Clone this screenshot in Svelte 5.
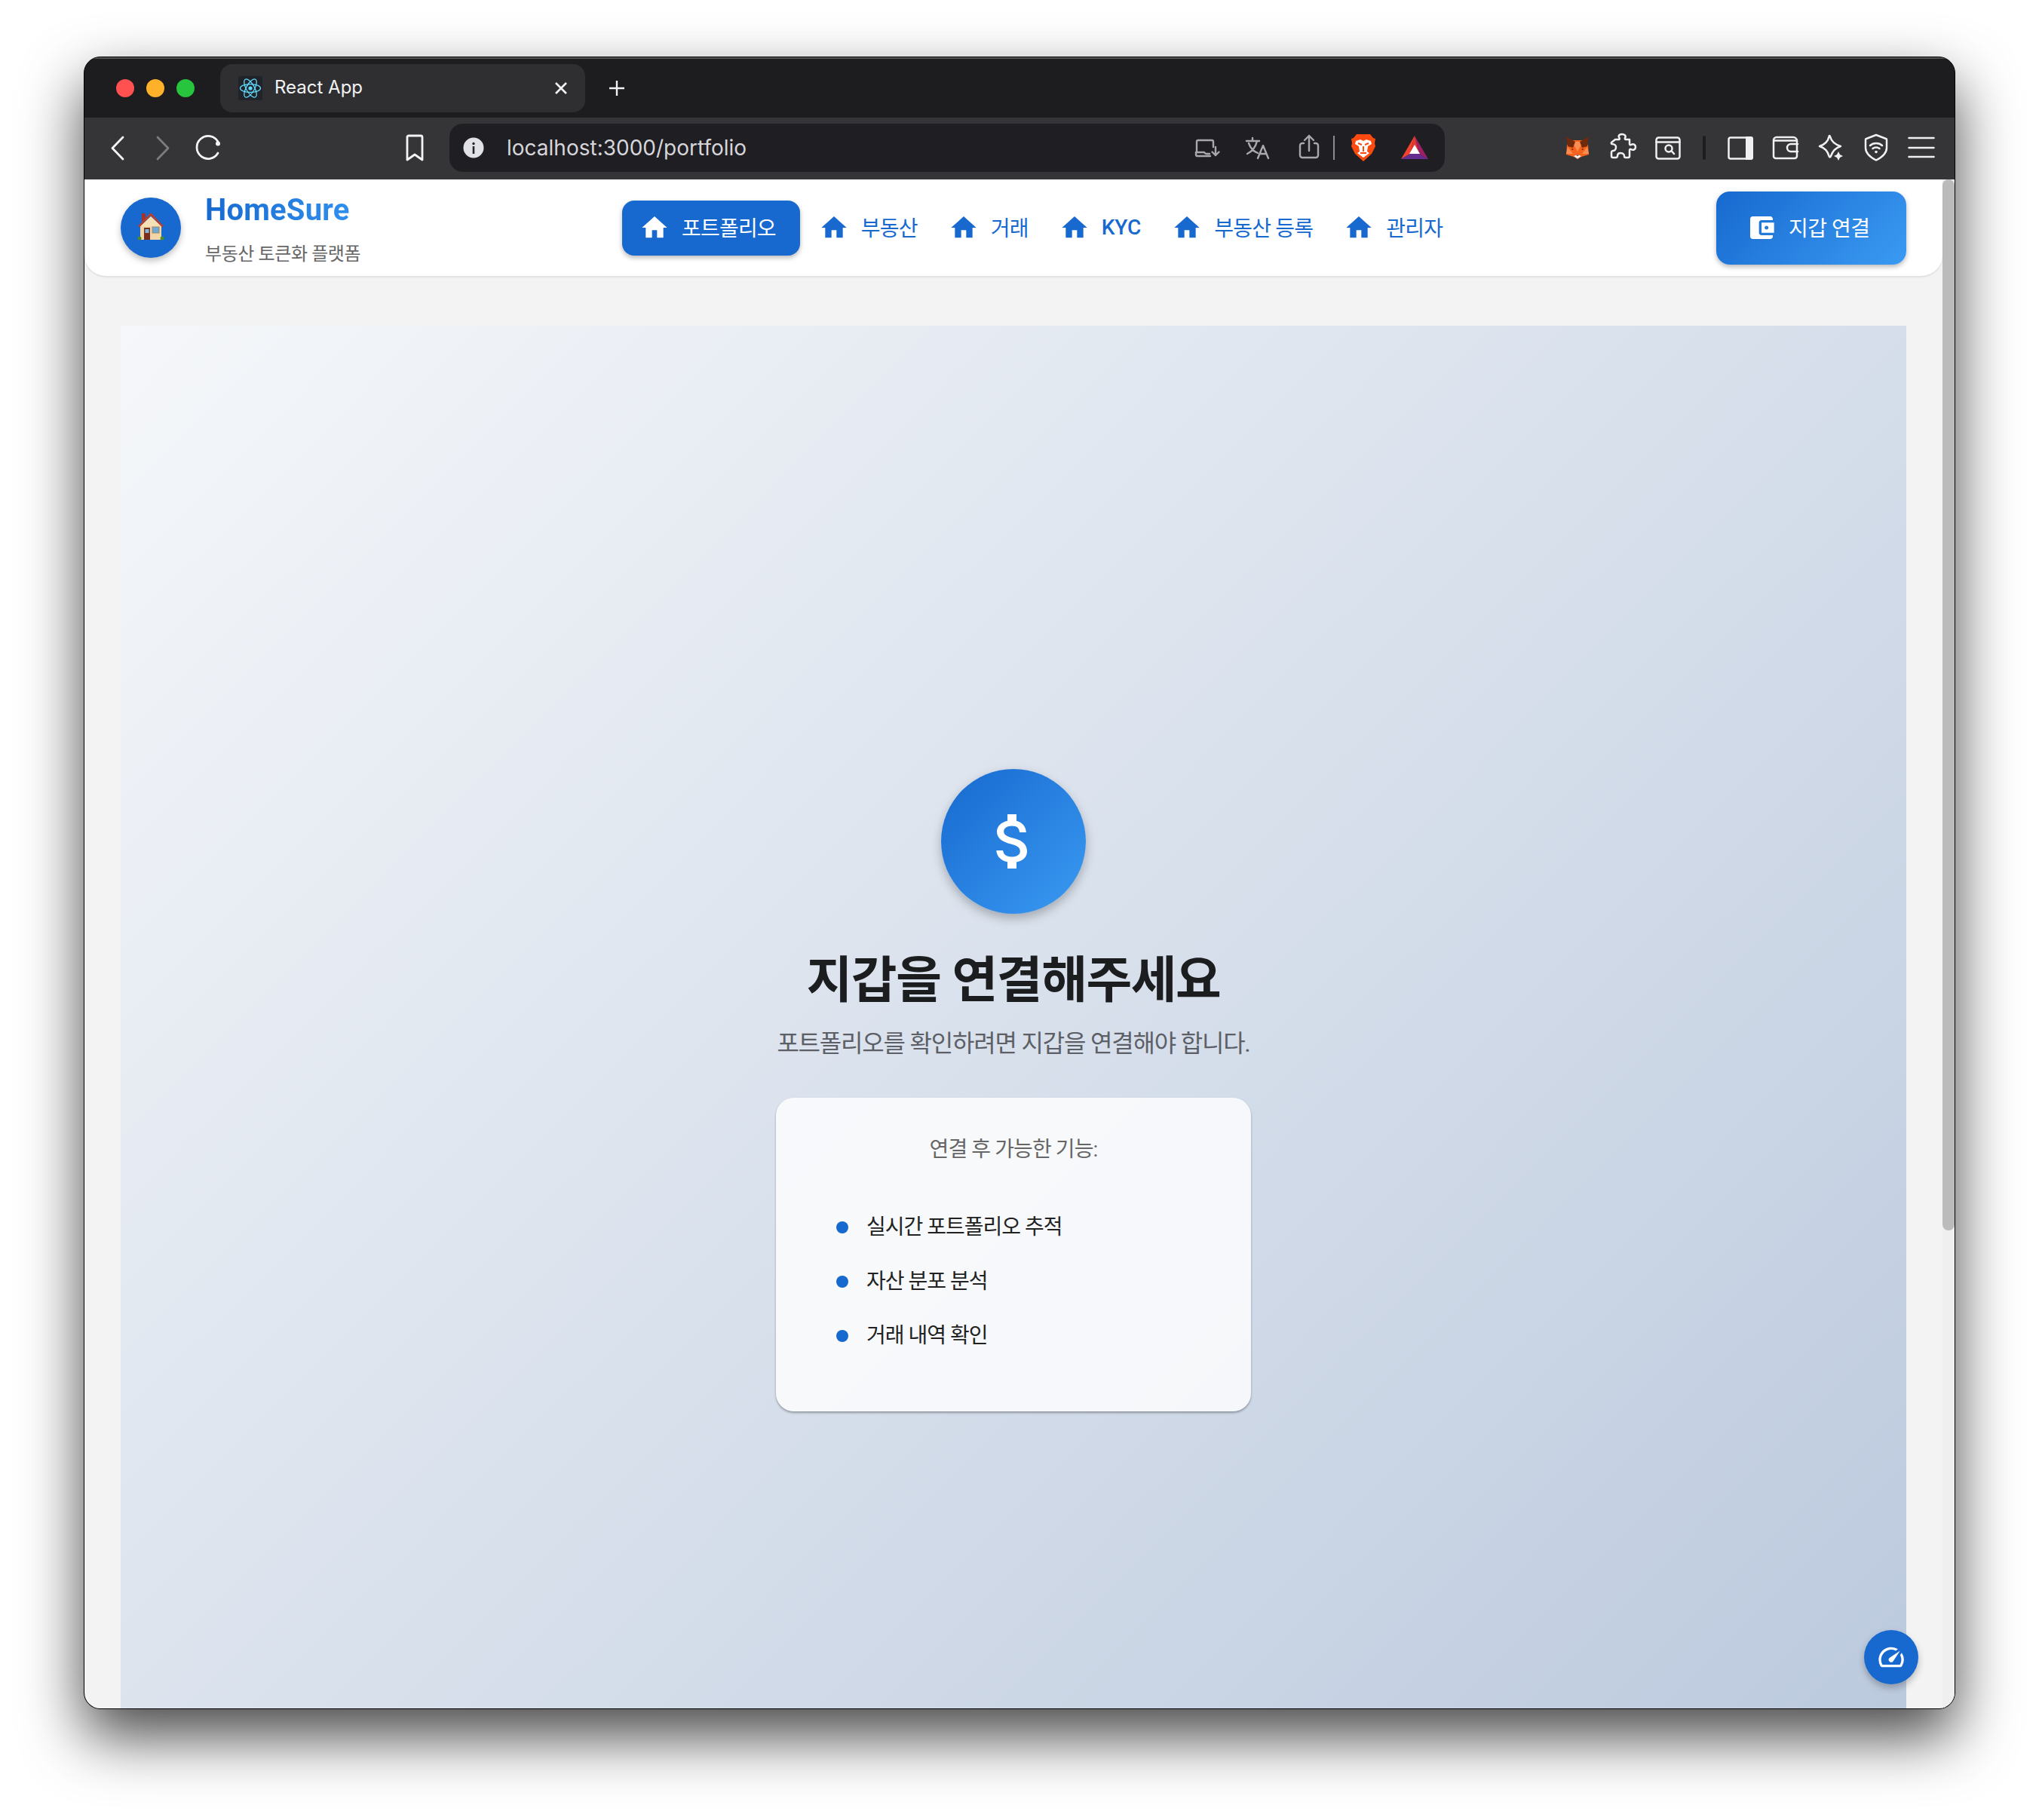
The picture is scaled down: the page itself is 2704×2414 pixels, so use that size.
<script>
  const navItems = [
    { label: '포트폴리오', active: true },
    { label: '부동산' },
    { label: '거래' },
    { label: 'KYC', latin: true },
    { label: '부동산 등록' },
    { label: '관리자' }
  ];
  const features = ['실시간 포트폴리오 추적', '자산 분포 분석', '거래 내역 확인'];
</script>

<div class="window">
  <div class="tabbar">
    <div class="dots">
      <span class="dot red"></span>
      <span class="dot amber"></span>
      <span class="dot green"></span>
    </div>
    <div class="tab">
      <svg class="favicon" viewBox="0 0 32 32">
        <rect width="32" height="32" rx="3" fill="#20232a" />
        <g fill="none" stroke="#61dafb" stroke-width="1.3">
          <ellipse cx="16" cy="16" rx="13.5" ry="5.4" />
          <ellipse cx="16" cy="16" rx="13.5" ry="5.4" transform="rotate(60 16 16)" />
          <ellipse cx="16" cy="16" rx="13.5" ry="5.4" transform="rotate(120 16 16)" />
        </g>
        <circle cx="16" cy="16" r="2.6" fill="#61dafb" />
      </svg>
      <span class="tab-title">React App</span>
      <svg class="tab-close" viewBox="0 0 16 16"><path d="M1 1 L15 15 M15 1 L1 15" /></svg>
    </div>
    <svg class="new-tab" viewBox="0 0 22 22"><path d="M11 1 V21 M1 11 H21" /></svg>
  </div>

  <div class="toolbar">
    <svg class="ti" viewBox="0 0 40 40"><path class="s3" d="M27 6 L13 20.5 L27 35" /></svg>
    <svg class="ti" viewBox="0 0 40 40"><path class="s3 dim" d="M13 6 L27 20.5 L13 35" /></svg>
    <svg class="ti" viewBox="0 0 40 40">
      <path class="s3" d="M33 12 A15 15 0 1 0 33 27" />
      <circle cx="33" cy="14.500" r="3" fill="#f4f4f4" />
    </svg>
    <svg class="ti bookmark" viewBox="0 0 40 40"><path class="s3" d="M10 6 a2 2 0 0 1 2-2 H28 a2 2 0 0 1 2 2 V36 L20 29 L10 36 Z" /></svg>

    <div class="urlbar">
      <svg class="info" viewBox="0 0 28 28">
        <circle cx="14" cy="14" r="13.5" fill="#e1e1e8" />
        <circle cx="14" cy="8.5" r="1.7" fill="#26262a" />
        <rect x="12.7" y="12" width="2.6" height="10" fill="#26262a" />
      </svg>
      <span class="url">localhost:3000/portfolio</span>
      <div class="url-tools">
        <svg class="ui" viewBox="0 0 40 40">
          <path class="g" d="M6 26 V12 a2 2 0 0 1 2-2 h18 a2 2 0 0 1 2 2 v7 M5 26 h11 q1 2 3 2 h4 M5 26 v3 a2 2 0 0 0 2 2 h17 M31 19 v11 m-4.500-4.500 l4.500 4.500 4.500-4.500" />
        </svg>
        <svg class="ui u2" viewBox="0 0 40 40">
          <path class="g" d="M5 11 H22 M13 7 v4 M19 11 C17 20 12 25 6 28 M8 14 C10 20 15 25 20 27 M20 34 L27 17 L34 34 M23 28 H31" />
        </svg>
        <svg class="ui u2" viewBox="0 0 40 40">
          <path class="g" d="M14 14 H12 a3 3 0 0 0-3 3 v13 a3 3 0 0 0 3 3 h18 a3 3 0 0 0 3-3 V17 a3 3 0 0 0-3-3 h-2 M21 24 V4 M15 10 l6-6 6 6" />
        </svg>
        <span class="url-divider"></span>
        <svg class="ui u3" viewBox="0 0 40 40">
          <path fill="#fb4a0f" d="M12 2 L30 2 L34 7 L37 8 L36 14 L37 18 L32 28 L21 38 L10 28 L5 18 L6 14 L5 8 L8 7 Z" />
          <path fill="#fff" d="M11 11 L17 9 L21 11 L25 9 L31 11 L32 15 L27 18 L26 25 L29 27 L21 33 L13 27 L16 25 L15 18 L10 15 Z" />
          <path fill="none" stroke="#fb4a0f" stroke-width="2" d="M14 14 l5 2 M28 14 l-5 2 M21 18 v7 M17 27 h8" />
        </svg>
        <svg class="ui u4" viewBox="0 0 40 40">
          <polygon points="20,4 2,35 14,28" fill="#f2432c" />
          <polygon points="20,4 38,35 26,28" fill="#9e1f63" />
          <polygon points="2,35 38,35 26,28 14,28" fill="#662d91" />
          <polygon points="20,4 14,28 26,28" fill="#e23a32" />
          <polygon points="20,16 27,28 13,28" fill="#fff" />
        </svg>
      </div>
    </div>

    <div class="ext-tools">
      <svg class="ti" viewBox="0 0 40 40">
        <path fill="#f6621c" d="M6 16 L13 10 H27 L34 16 L35 29 L25 32 L20 35 L15 32 L5 29 Z" />
        <path fill="#fa8d52" d="M13 12 L20 25 L27 12 Z M7 19 L14 28 L5 28 Z M33 19 L26 28 L35 28 Z" />
        <path fill="#6e2a0a" d="M5 5 L17 12 L14 20 L7 18 Z M35 5 L23 12 L26 20 L33 18 Z" />
        <path fill="#4a1c06" d="M12 21 l3 1 -2 1 Z M28 21 l-3 1 2 1 Z" />
        <path fill="#f2f2f2" d="M15 31 L20 29 L25 31 L20 34.500 Z" />
        <path fill="#2a1408" d="M18 29.500 h4 l-2 1.500 Z" />
      </svg>
      <svg class="ti" viewBox="0 0 40 40">
        <path class="w" d="M10 9 H15 C16 9 16 8 15.500 7 C13 3 17 2 19 2 C22 2 25 4 23 7 C22.500 8 23 9 24 9 H29 V15 C29 16 30 16.500 31 16 C34 14 37 16 37 19 C37 22 34 24 31 22 C30 21.500 29 22 29 23 V31 a2 2 0 0 1-2 2 H24 C22 33 22 32 22 31 C22 28 19 27 17 27 C15 27 13 28 13 31 C13 32 12 33 11 33 H7 a2 2 0 0 1-2-2 V26 C5 25 6 24 7 24 C10 24 11 21 11 19 C11 17 9 15 6 15 C5 15 4.500 14 5 13 Z" />
      </svg>
      <svg class="ti" viewBox="0 0 40 40">
        <rect class="w" x="4.500" y="6.500" width="31" height="28" rx="3" />
        <path class="w" d="M4.500 12.500 H35.500 M24.500 24 L28 28" />
        <circle class="w" cx="21" cy="21" r="4.500" />
      </svg>
      <span class="ext-divider"></span>
      <svg class="ti" viewBox="0 0 40 40">
        <rect class="w" x="4.500" y="6.500" width="31" height="28" rx="2.500" />
        <path d="M27 5 H34 a3 3 0 0 1 3 3 V33 a3 3 0 0 1-3 3 H27 Z" fill="#f0f0f2" />
      </svg>
      <svg class="ti" viewBox="0 0 40 40">
        <path class="w" d="M4 10 a4 4 0 0 1 4-4 H30 a5 5 0 0 1 5 5 V31 a3 3 0 0 1-3 3 H7 a3 3 0 0 1-3-3 Z M5 10.500 H35 M36 15 H27 a5 5 0 0 0 0 10 H36" />
      </svg>
      <svg class="ti" viewBox="0 0 40 40">
        <path class="w" d="M19 5 C20.500 11 25 15.500 33 18 C26 20 22.500 24 20 31 C19.500 33 18 33 17.500 31 C15.500 24 12 20 5 18 C12 15.500 16.500 11 17.500 5 C17.700 3.500 18.700 3.500 19 5 Z" />
        <path fill="#f0f0f2" d="M30 25 L32 29 L36 31 L32 33 L30 37 L28 33 L24 31 L28 29 Z" />
      </svg>
      <svg class="ti" viewBox="0 0 40 40">
        <path class="w" d="M20 3 L33 8 a1 1 0 0 1 1 1 V20 C34 28 27 33 20 36.500 C13 33 6 28 6 20 V9 a1 1 0 0 1 1-1 Z" />
        <path class="w" d="M12 17 C16 13 24 13 28 17 M15.500 21 C18 19 22 19 24.500 21" />
        <circle cx="20" cy="25.500" r="1.800" fill="#f0f0f2" />
      </svg>
      <svg class="ti" viewBox="0 0 40 40"><path class="w" d="M3.500 7 H36.500 M3.500 20 H36.500 M3.500 32 H36.500" /></svg>
    </div>
  </div>

  <div class="viewport">
    <header class="app-header">
      <div class="brand">
        <div class="logo">
          <svg viewBox="0 0 40 40" class="house">
            <rect x="8" y="3" width="5" height="10" fill="#a8322a" />
            <rect x="6" y="17" width="28" height="21" fill="#f1d7a8" />
            <path d="M20 7 L6 20 L34 20 Z" fill="#f6e0b8" />
            <path d="M20 2 L37 20 L35 21.500 L20 6 L5 21.500 L3 20 Z" fill="#b5402f" />
            <rect x="11" y="22" width="8" height="16" fill="#7a2f1e" />
            <rect x="12.500" y="24" width="5" height="5" fill="#7fb6de" />
            <rect x="22" y="21" width="9" height="8" fill="#6fa8d6" stroke="#9a8a6a" />
            <circle cx="5" cy="36" r="2.500" fill="#4c8c2b" />
            <circle cx="35" cy="36" r="2.500" fill="#4c8c2b" />
          </svg>
        </div>
        <div class="brand-text">
          <div class="brand-name">HomeSure</div>
          <div class="brand-sub">부동산 토큰화 플랫폼</div>
        </div>
      </div>

      <nav class="nav">
        {#each navItems as item}
          <button class="nav-btn" class:active={item.active}>
            <svg viewBox="0 0 24 24"><path d="M10 20v-6h4v6h5v-8h3L12 3 2 12h3v8z" /></svg>
            <span class:latin={item.latin}>{item.label}</span>
          </button>
        {/each}
      </nav>

      <button class="wallet-btn">
        <svg viewBox="0 0 24 24"><path d="M21 18v1c0 1.100-.9 2-2 2H5c-1.110 0-2-.9-2-2V5c0-1.100.89-2 2-2h14c1.100 0 2 .9 2 2v1h-9c-1.110 0-2 .9-2 2v8c0 1.100.89 2 2 2h9zm-9-2h10V8H12v8zm4-2.500c-.83 0-1.500-.67-1.500-1.500s.67-1.500 1.500-1.500 1.500.67 1.500 1.500-.67 1.500-1.500 1.500z" /></svg>
        <span>지갑 연결</span>
      </button>
    </header>

    <main class="main">
      <section class="panel">
        <div class="coin">
          <svg viewBox="0 0 24 24"><path d="M11.800 10.900c-2.270-.59-3-1.200-3-2.150 0-1.090 1.010-1.850 2.700-1.850 1.780 0 2.440.85 2.500 2.100h2.210c-.07-1.720-1.120-3.300-3.210-3.810V3h-3v2.160c-1.940.42-3.500 1.680-3.500 3.610 0 2.310 1.910 3.460 4.700 4.130 2.500.6 3 1.480 3 2.410 0 .69-.49 1.790-2.700 1.790-2.060 0-2.870-.92-2.980-2.100h-2.200c.12 2.190 1.760 3.420 3.680 3.830V21h3v-2.150c1.950-.37 3.500-1.500 3.500-3.550 0-2.840-2.430-3.810-4.700-4.400z" /></svg>
        </div>
        <h1>지갑을 연결해주세요</h1>
        <p class="lead">포트폴리오를 확인하려면 지갑을 연결해야 합니다.</p>
        <div class="card">
          <p class="card-title">연결 후 가능한 기능:</p>
          <ul>
            {#each features as f}
              <li><span class="bullet"></span>{f}</li>
            {/each}
          </ul>
        </div>
      </section>
    </main>

    <div class="scrollbar"><span class="thumb"></span></div>

    <button class="fab" aria-label="speed">
      <svg viewBox="0 0 24 24"><path d="M20.380 8.570l-1.230 1.850a8 8 0 0 1-.22 7.580H5.070A8 8 0 0 1 15.580 6.850l1.850-1.230A10 10 0 0 0 3.350 19a2 2 0 0 0 1.720 1h13.850a2 2 0 0 0 1.740-1 10 10 0 0 0-.27-10.440zm-9.790 6.840a2 2 0 0 0 2.830 0l5.660-8.490-8.490 5.660a2 2 0 0 0 0 2.830z" /></svg>
    </button>
  </div>
</div>

<style>
  :global(body) {
    margin: 0;
    background: #fff;
    font-family: Roboto, "Noto Sans CJK KR", sans-serif;
  }
  :global(#app) {
    padding: 75px 111px 148px;
    width: 2482px;
    height: 2191px;
  }
  .window {
    width: 2480px;
    height: 2190px;
    border: 1px solid #000;
    border-radius: 22px;
    overflow: hidden;
    display: flex;
    flex-direction: column;
    background: #1d1d1f;
    box-shadow: 0 36px 80px rgba(0, 0, 0, 0.72);
    position: relative;
  }
  .tabbar {
    height: 80px;
    flex: none;
    display: flex;
    align-items: center;
    background: #1d1d1f;
    border-top: 2px solid #555;
    box-sizing: border-box;
    padding-left: 42px;
  }
  .dots { display: flex; gap: 16px; }
  .dot { width: 24px; height: 24px; border-radius: 50%; }
  .red { background: #ff5150; }
  .amber { background: #ffb12a; }
  .green { background: #27c43e; }
  .tab {
    margin-left: 34px;
    width: 484px;
    height: 64px;
    box-sizing: border-box;
    padding: 0 24px;
    border-radius: 16px;
    background: #2f2f32;
    display: flex;
    align-items: center;
  }
  .favicon { width: 32px; height: 32px; flex: none; }
  .tab-title {
    margin-left: 16px;
    flex: 1;
    font: 400 24px Inter, sans-serif;
    line-height: 28px;
    padding-bottom: 2px;
    color: #f2f2f2;
  }
  .tab-close { width: 16px; height: 16px; fill: none; stroke: #f2f2f2; stroke-width: 2.6; }
  .new-tab { margin-left: 31px; width: 22px; height: 22px; fill: none; stroke: #f2f2f2; stroke-width: 2.4; }

  .toolbar {
    height: 82px;
    flex: none;
    box-sizing: border-box;
    display: flex;
    align-items: flex-start;
    padding: 8px 0 0 24px;
    gap: 20px;
    background: #353538;
  }
  .ti { width: 40px; height: 40px; flex: none; margin-top: 12px; }
  .s3 { fill: none; stroke: #f4f4f4; stroke-width: 2.800; stroke-linecap: round; stroke-linejoin: round; }
  .dim { stroke: #7c7c7e; }
  .w { fill: none; stroke: #f0f0f2; stroke-width: 2.500; stroke-linecap: round; stroke-linejoin: round; }
  .g { fill: none; stroke: #a9a9ad; stroke-width: 2.400; stroke-linecap: round; stroke-linejoin: round; }
  .bookmark { margin-left: 214px; margin-right: 6px; }
  .urlbar {
    width: 1320px;
    height: 64px;
    flex: none;
    border-radius: 18px;
    background: #1f1f23;
    display: flex;
    align-items: center;
    box-sizing: border-box;
    padding: 0 20px 0 18px;
  }
  .info { width: 28px; height: 28px; flex: none; }
  .url { margin-left: 30px; font: 400 28px Inter, sans-serif; color: #d6d6da; }
  .url-tools { margin-left: auto; display: flex; align-items: center; }
  .ui { width: 40px; height: 40px; flex: none; }
  .u2 { margin-left: 27px; }
  .u3 { margin-left: 17px; }
  .u4 { margin-left: 29px; }
  .url-divider { width: 2px; height: 32px; margin-left: 13px; background: #8c8c8e; }
  .ext-tools { margin-left: 136px; display: flex; gap: 20px; align-items: flex-start; }
  .ext-divider { width: 4px; height: 32px; margin: 16px 6px 0; border-radius: 2px; background: #1d1d1f; }

  .viewport {
    flex: 1;
    position: relative;
    overflow: hidden;
    background: #f3f3f3;
  }
  .app-header {
    height: 128px;
    width: 2464px;
    box-sizing: border-box;
    padding: 0 48px;
    display: flex;
    align-items: center;
    background: #fff;
    border-radius: 0 0 28px 28px;
    box-shadow: 0 2px 2px rgba(0, 0, 0, 0.08);
    position: relative;
    z-index: 1;
  }
  .brand { display: flex; align-items: center; gap: 32px; width: 665px; flex: none; }
  .logo {
    width: 80px;
    height: 80px;
    border-radius: 50%;
    background: #1769cf;
    display: flex;
    align-items: center;
    justify-content: center;
    box-shadow: 0 4px 8px rgba(0, 0, 0, 0.25);
  }
  .house { width: 40px; height: 40px; margin-bottom: 4px; }
  .brand-text { display: flex; flex-direction: column; padding-top: 5px; }
  .brand-name {
    font-size: 40px;
    line-height: 46px;
    font-weight: 700;
    letter-spacing: 0.2px;
    background: linear-gradient(90deg, #1769cf, #2f8fee);
    -webkit-background-clip: text;
    background-clip: text;
    color: transparent;
    width: fit-content;
  }
  .brand-sub {
    margin-top: 19px;
    font-size: 24px;
    line-height: 32px;
    letter-spacing: -0.4px;
    color: #666;
  }
  .nav { display: flex; align-items: center; flex: none; }
  .nav-btn {
    height: 73px;
    padding: 0 16px 0 25px;
    border: 0;
    background: none;
    display: flex;
    align-items: center;
    gap: 16px;
    font: 400 28px Roboto, "Noto Sans CJK KR", sans-serif;
    letter-spacing: -0.8px;
    color: #1769cf;
    border-radius: 16px;
  }
  .nav-btn span { padding-bottom: 2px; }
  .nav-btn .latin { letter-spacing: 0; font-weight: 500; }
  .nav-btn svg { width: 40px; height: 40px; fill: currentColor; flex: none; }
  .nav-btn.active {
    padding: 0 32px 0 23px;
    background: #1769cf;
    color: #fff;
    box-shadow: 0 3px 6px rgba(0, 0, 0, 0.28);
  }
  .wallet-btn {
    margin-left: auto;
    width: 252px;
    height: 97px;
    flex: none;
    border: 0;
    border-radius: 18px;
    padding: 0 0 0 40px;
    background: linear-gradient(135deg, #1769cf, #3a9af2);
    color: #fff;
    display: flex;
    align-items: center;
    gap: 16px;
    font: 400 28px Roboto, "Noto Sans CJK KR", sans-serif;
    letter-spacing: -0.5px;
    box-shadow: 0 3px 6px rgba(0, 0, 0, 0.28);
  }
  .wallet-btn span { padding-bottom: 2px; }
  .wallet-btn svg { width: 40px; height: 40px; fill: #fff; flex: none; }

  .main { padding: 66px 64px 0 48px; }
  .panel {
    min-height: 2400px;
    box-sizing: border-box;
    padding-top: 588px;
    background: linear-gradient(135deg, #f5f7fa 0%, #bccade 100%);
    background-size: 100% 1834px;
    background-repeat: no-repeat;
    display: flex;
    flex-direction: column;
    align-items: center;
  }
  .coin {
    width: 192px;
    height: 192px;
    border-radius: 50%;
    background: linear-gradient(135deg, #1769cf, #3a9af2);
    display: flex;
    align-items: center;
    justify-content: center;
    box-shadow: 0 6px 14px rgba(0, 0, 0, 0.26);
  }
  .coin svg { width: 96px; height: 96px; fill: #fff; }
  h1 {
    margin: 49px 0 0;
    font-size: 66px;
    line-height: 80px;
    font-weight: 700;
    letter-spacing: -1.4px;
    color: #1b1d1f;
  }
  .lead {
    margin: 19px 0 0;
    font-size: 32px;
    line-height: 48px;
    letter-spacing: -1.2px;
    color: #5c6066;
  }
  .card {
    margin-top: 48px;
    width: 630px;
    box-sizing: border-box;
    padding: 49px 0 80px 80px;
    border-radius: 24px;
    background: rgba(255, 255, 255, 0.8);
    box-shadow: 0 2px 3px rgba(0, 0, 0, 0.32);
  }
  .card-title {
    margin: 0 0 0 -80px;
    text-align: center;
    font-size: 28px;
    line-height: 40px;
    letter-spacing: -0.9px;
    color: #666;
  }
  ul { margin: 63px 0 0; padding: 0; list-style: none; display: flex; flex-direction: column; gap: 32px; }
  li {
    display: flex;
    align-items: center;
    gap: 24px;
    font-size: 28px;
    line-height: 40px;
    letter-spacing: -1px;
    color: #222;
  }
  .bullet { width: 16px; height: 16px; border-radius: 50%; background: #1769cf; flex: none; }

  .scrollbar {
    position: absolute;
    top: 0;
    right: 0;
    bottom: 0;
    width: 16px;
    background: #efefef;
  }
  .thumb {
    display: block;
    height: 1394px;
    border-radius: 8px;
    background: #bbb;
  }
  .fab {
    position: absolute;
    right: 48px;
    bottom: 32px;
    width: 72px;
    height: 72px;
    padding: 0;
    border: 0;
    border-radius: 50%;
    background: #1769cf;
    display: flex;
    align-items: center;
    justify-content: center;
    box-shadow: 0 5px 10px rgba(0, 0, 0, 0.25);
    z-index: 2;
  }
  .fab svg { width: 40px; height: 40px; fill: #fff; }
</style>
